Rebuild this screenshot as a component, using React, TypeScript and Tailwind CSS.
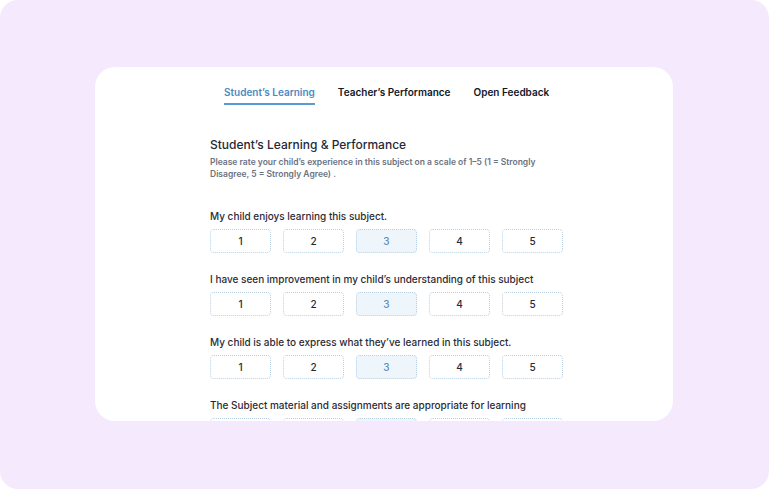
import React from "react";

const questions = [
  "My child enjoys learning this subject.",
  "I have seen improvement in my child’s understanding of this subject",
  "My child is able to express what they’ve learned in this subject.",
  "The Subject material and assignments are appropriate for learning",
];

const tabs = ["Student’s Learning", "Teacher’s Performance", "Open Feedback"];

export default function App() {
  return (
    <div className="w-[769px] h-[489px] bg-white font-['Inter',sans-serif]">
      <div className="w-[769px] h-[489px] rounded-[18px] bg-[#f5e9fd] pt-[67px] pl-[95px]">
        <div className="w-[578px] h-[354px] rounded-[20px] bg-white overflow-hidden">
          {/* tabs */}
          <div className="flex gap-[23px] pl-[129px] pt-[18px]">
            {tabs.map((t, i) => (
              <div
                key={t}
                className={`pb-[4px] border-b-2 text-[10px] leading-[14px] font-semibold ${
                  i === 0 ? "border-[#5b9bd5] text-[#4a8ac4]" : "border-transparent text-[#111827]"
                }`}
              >
                {t}
              </div>
            ))}
          </div>

          <div className="pl-[115px] pt-[31px]">
            <h1 className="text-[12px] leading-[18px] font-medium text-[#1f2937]">
              Student’s Learning &amp; Performance
            </h1>
            <p className="mt-[2px] text-[8.5px] leading-[12px] font-semibold text-[#6b7280]">
              Please rate your child’s experience in this subject on a scale of 1–5 (1 = Strongly
              <br />
              Disagree, 5 = Strongly Agree) .
            </p>

            <div className="mt-[29px] flex flex-col gap-[19px]">
              {questions.map((q) => (
                <div key={q}>
                  <p className="text-[10px] leading-[14px] font-medium text-[#2b2b36]">{q}</p>
                  <div className="mt-[6px] flex gap-[12px]">
                    {[1, 2, 3, 4, 5].map((n) => (
                      <div
                        key={n}
                        className={`w-[61px] h-[24px] flex items-center justify-center rounded-[4px] border border-dotted border-[#b9d0e3] text-[10px] font-medium ${
                          n === 3 ? "bg-[#eef6fc] text-[#5b8fc0]" : "bg-white text-[#1f2937]"
                        }`}
                      >
                        {n}
                      </div>
                    ))}
                  </div>
                </div>
              ))}
            </div>
          </div>
        </div>
      </div>
    </div>
  );
}
